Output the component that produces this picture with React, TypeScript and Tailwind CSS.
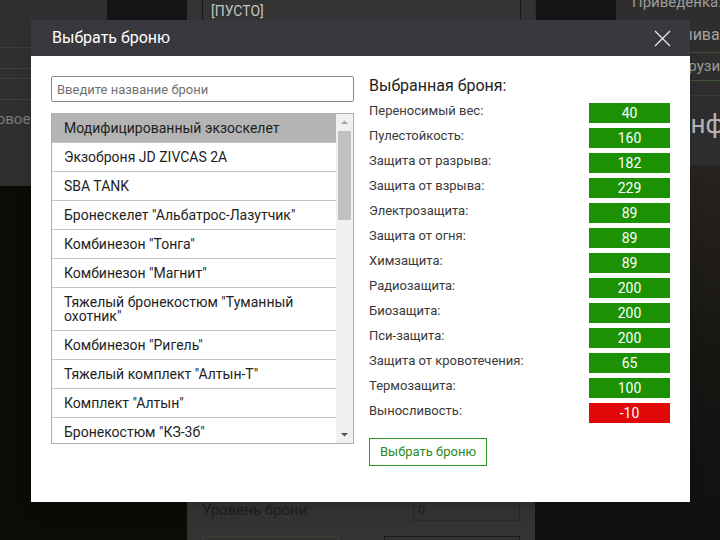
import React from 'react'

const armors = [
  'Модифицированный экзоскелет',
  'Экзоброня JD ZIVCAS 2A',
  'SBA TANK',
  'Бронескелет "Альбатрос-Лазутчик"',
  'Комбинезон "Тонга"',
  'Комбинезон "Магнит"',
  'Тяжелый бронекостюм "Туманный охотник"',
  'Комбинезон "Ригель"',
  'Тяжелый комплект "Алтын-Т"',
  'Комплект "Алтын"',
  'Бронекостюм "КЗ-3б"',
  'Комбинезон "Сева"',
  'Бронекостюм "Берилл-5М"',
]

const stats: { label: string; value: number }[] = [
  { label: 'Переносимый вес:', value: 40 },
  { label: 'Пулестойкость:', value: 160 },
  { label: 'Защита от разрыва:', value: 182 },
  { label: 'Защита от взрыва:', value: 229 },
  { label: 'Электрозащита:', value: 89 },
  { label: 'Защита от огня:', value: 89 },
  { label: 'Химзащита:', value: 89 },
  { label: 'Радиозащита:', value: 200 },
  { label: 'Биозащита:', value: 200 },
  { label: 'Пси-защита:', value: 200 },
  { label: 'Защита от кровотечения:', value: 65 },
  { label: 'Термозащита:', value: 100 },
  { label: 'Выносливость:', value: -10 },
]

// фон страницы за модальным окном (затемнён)
function PageBehind() {
  return (
    <div className="flex h-full">
      <div className="flex w-[187px] shrink-0 flex-col">
        <div className="h-[186px] overflow-hidden bg-[#2f2f2f]">
          <div className="flex justify-end">
            <div className="h-5 w-20 bg-[#151515]" />
          </div>
          <div className="mt-[27px] border-t border-[#3d3d3d]" />
          <div className="mt-5 border-t border-[#3d3d3d]" />
          <div className="mt-[9px] border-t border-[#3d3d3d]" />
          <div className="mt-5 border-t border-[#3d3d3d]" />
          <div className="-ml-[14px] mt-[8px] whitespace-nowrap text-[15px] text-[#7a7a7a]">Новое качество</div>
        </div>
        <div className="flex-1 bg-[#0c0b08]" />
      </div>

      <div className="flex w-[348px] shrink-0 flex-col bg-[#333333]">
        <div className="ml-[15px] mr-[14px] h-[60px] border-x border-[#1a1a1a] px-2 pt-px text-[14px] text-[#c4c4c4]">
          [ПУСТО]
        </div>
        <div className="flex-1" />
        <div className="flex items-center justify-between pb-[15px] pl-[15px] pr-[15px]">
          <span className="text-[15px] text-[#1e1e1e]">Уровень брони:</span>
          <div className="h-[22px] w-[107px] border border-[#292929] px-1 text-[13px] leading-5 text-[#222]">0</div>
        </div>
        <div className="flex justify-between px-[15px]">
          <div className="h-1 w-[137px] border border-b-0 border-[#34432d]" />
          <div className="h-1 w-[136px] border border-b-0 border-[#1c1c1c]" />
        </div>
      </div>

      <div className="flex min-w-0 flex-1 flex-col overflow-hidden">
        <div className="h-[165px] bg-[#2e2e2e]">
          <div className="flex items-start">
            <div className="ml-px h-5 w-20 shrink-0 bg-[#151515]" />
            <div className="-mt-[9px] ml-4 whitespace-nowrap text-[15px] text-[#9c9c9c]">Приведенка:</div>
          </div>
          <div className="ml-[103px] mt-[3px] whitespace-nowrap text-[16px] text-[#a3a3a3]">Увеличивает</div>
          <div className="ml-[97px] mt-[5px] h-[29px] w-[200px] whitespace-nowrap border border-[#3e5236] pl-[32px] text-[15px] leading-[27px] text-[#9c9c9c]">
            Загрузить
          </div>
          <div className="mt-[14px] border-t border-[#3a3a3a]" />
          <div className="ml-[137px] mt-[12px] whitespace-nowrap text-[26px] leading-8 text-[#b5b5b5]">Информация</div>
        </div>
        <div className="flex-1 bg-linear-to-b from-[#27241f] via-[#181613] to-[#121010]" />
      </div>
    </div>
  )
}

function ArmorList() {
  return (
    <div className="flex h-[331px] overflow-hidden border border-[#b0b0b0]">
      <div className="flex-1 overflow-hidden">
        {armors.map((name, i) => (
          <div
            key={name}
            className={
              'border-b border-[#c4c4c4] py-[7px] pl-3 pr-3 text-[14px] leading-[14px] text-[#1e1e1e] ' +
              (i === 0 ? 'bg-[#b4b4b4]' : 'bg-white')
            }
          >
            {name}
          </div>
        ))}
      </div>
      <div className="flex w-[17px] flex-col items-center bg-[#f0f0f0]">
        <svg width="9" height="17" viewBox="0 0 9 17" className="shrink-0">
          <path d="M1 10 L4.5 6.5 L8 10 Z" fill="#a3a3a3" />
        </svg>
        <div className="h-[89px] w-[13px] bg-[#c1c1c1]" />
        <div className="flex-1" />
        <svg width="9" height="17" viewBox="0 0 9 17" className="shrink-0">
          <path d="M1 7 L4.5 10.5 L8 7 Z" fill="#505050" />
        </svg>
      </div>
    </div>
  )
}

function StatsPanel() {
  return (
    <div className="flex w-[301px] flex-col">
      <h3 className="text-[16px] leading-5 text-[#222]">Выбранная броня:</h3>
      <div className="mt-[7px] flex flex-col gap-[5px]">
        {stats.map((s) => (
          <div key={s.label} className="flex items-start">
            <span className="flex-1 text-[13px] leading-4 text-[#3a3a3a]">{s.label}</span>
            <span
              className={
                'h-5 w-[81px] text-center text-[14px] leading-5 text-white ' +
                (s.value < 0 ? 'bg-[#e00808]' : 'bg-[#1c9104]')
              }
            >
              {s.value}
            </span>
          </div>
        ))}
      </div>
      <button className="mt-[15px] h-7 w-[118px] border border-[#2b9a1e] text-[13px] text-[#2b8a1e]">
        Выбрать броню
      </button>
    </div>
  )
}

export default function App() {
  return (
    <div className="relative h-[540px] w-[720px] overflow-hidden bg-[#0d0c0a] font-['Roboto',sans-serif]">
      <PageBehind />

      <div className="absolute left-[31px] top-5 flex w-[659px] flex-col shadow-lg">
        <div className="flex h-9 items-center justify-between bg-[#39383f] pl-[21px] pr-[19px]">
          <span className="text-[16px] text-white">Выбрать броню</span>
          <svg width="17" height="17" viewBox="0 0 17 17">
            <path d="M1 1 L16 16 M16 1 L1 16" stroke="#e2e2e2" strokeWidth="1.4" />
          </svg>
        </div>
        <div className="flex h-[446px] gap-[15px] bg-white px-5 pt-5">
          <div className="flex w-[303px] flex-col gap-[11px]">
            <input
              placeholder="Введите название брони"
              className="h-[26px] rounded-[2px] border border-[#8a8a8a] px-[5px] text-[13px] text-[#222] outline-none placeholder:text-[#707070]"
            />
            <ArmorList />
          </div>
          <StatsPanel />
        </div>
      </div>
    </div>
  )
}
